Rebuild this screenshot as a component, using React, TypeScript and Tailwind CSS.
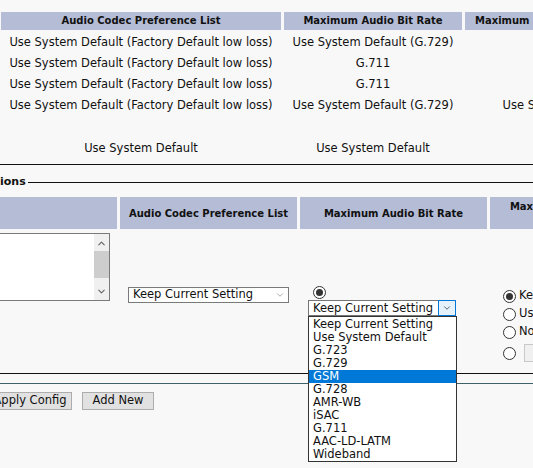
import { ChevronDown, ChevronUp } from 'lucide-react';

const font = { fontFamily: '"DejaVu Sans", Verdana, sans-serif' };

const topRows = [
  ['Use System Default (Factory Default low loss)', 'Use System Default (G.729)', ''],
  ['Use System Default (Factory Default low loss)', 'G.711', ''],
  ['Use System Default (Factory Default low loss)', 'G.711', ''],
  ['Use System Default (Factory Default low loss)', 'Use System Default (G.729)', 'Use System Default (G.729)'],
];

const options = [
  'Keep Current Setting',
  'Use System Default',
  'G.723',
  'G.729',
  'GSM',
  'G.728',
  'AMR-WB',
  'iSAC',
  'G.711',
  'AAC-LD-LATM',
  'Wideband',
];

function Radio({ checked }: { checked?: boolean }) {
  return (
    <span className="flex h-[13px] w-[13px] shrink-0 items-center justify-center rounded-full border border-[#333] bg-white">
      {checked && <span className="h-[7px] w-[7px] rounded-full bg-[#333]" />}
    </span>
  );
}

function Header({ w, children, className = '' }: { w: string; children?: React.ReactNode; className?: string }) {
  return (
    <div className={`${w} shrink-0 bg-[#b4bcd6] text-center text-[10px] font-bold text-[#111] ${className}`}>
      {children}
    </div>
  );
}

export default function App() {
  return (
    <div className="relative h-[468px] w-[533px] overflow-hidden bg-[#f8f8f8] text-[11.5px] text-[#111]" style={font}>
      {/* top summary table */}
      <div className="pt-[12px]">
        <div className="ml-[1px] flex h-[18px] gap-[3px]">
          <Header w="w-[280px]" className="leading-[18px]">Audio Codec Preference List</Header>
          <Header w="w-[178px]" className="leading-[18px]">Maximum Audio Bit Rate</Header>
          <Header w="w-[236px]" className="whitespace-nowrap pl-[10px] text-left leading-[18px]">Maximum Session Bit Rate for Video Calls</Header>
        </div>
        <div className="ml-[1px] mt-[2px]">
          {topRows.map((r, i) => (
            <div key={i} className="flex h-[21px] items-center gap-[3px]">
              <div className="w-[280px] shrink-0 text-center">{r[0]}</div>
              <div className="w-[178px] shrink-0 text-center">{r[1]}</div>
              <div className="w-[236px] shrink-0 whitespace-nowrap text-center">{r[2]}</div>
            </div>
          ))}
          <div className="h-[22px]" />
          <div className="flex h-[21px] items-center gap-[3px]">
            <div className="w-[280px] shrink-0 text-center">Use System Default</div>
            <div className="w-[178px] shrink-0 text-center">Use System Default</div>
          </div>
        </div>
      </div>

      <div className="mt-[5px] h-px bg-[#111]" />

      {/* fieldset */}
      <div className="mt-[10px] flex items-center">
        <span className="text-[11px] font-bold leading-[14px]">ions</span>
        <div className="ml-[2px] h-px flex-1 bg-[#111]" />
      </div>

      <div className="mt-[8px] flex h-[32px] gap-[3px]">
        <Header w="w-[117px]" />
        <Header w="w-[177px]" className="flex items-center justify-center">Audio Codec Preference List</Header>
        <Header w="w-[187px]" className="flex items-center justify-center">Maximum Audio Bit Rate</Header>
        <Header w="w-[190px]" className="pt-[3px] leading-[14px]">
          Maximum Session Bit Rate
          <br />
          for Video Calls
        </Header>
      </div>

      <div className="flex h-[68px] gap-[3px] pt-[4px]">
        <div className="w-[117px] shrink-0">
          <div className="flex h-[68px] w-[110px] border border-l-0 border-[#7a7a7a] bg-white">
            <div className="flex-1" />
            <div className="flex w-[15px] flex-col items-center bg-[#f0f0f0]">
              <ChevronUp size={11} strokeWidth={2.2} className="mt-[4px] text-[#606060]" />
              <div className="mt-[2px] h-[27px] w-[15px] bg-[#cdcdcd]" />
              <div className="flex-1" />
              <ChevronDown size={11} strokeWidth={2.2} className="mb-[3px] text-[#606060]" />
            </div>
          </div>
        </div>
        <div className="w-[177px] shrink-0 pl-[8px] pt-[54px]">
          <div className="flex h-[16px] w-[161px] items-center border border-[#7a7a7a] bg-white pl-[4px]">
            <span className="flex-1 leading-none">Keep Current Setting</span>
            <ChevronDown size={10} strokeWidth={1.5} className="mr-[3px] text-[#777]" />
          </div>
        </div>
        <div className="relative w-[187px] shrink-0 pl-[8px] pt-[53px]">
          <div className="ml-[5px]">
            <Radio checked />
          </div>
          <div className="mt-[1px] flex h-[16px] w-[148px] border border-[#767676] bg-white">
            <span className="flex-1 pl-[4px] leading-[14px]">Keep Current Setting</span>
            <span className="-my-px -mr-px flex w-[18px] items-center justify-center border border-[#0078d7] bg-[#e5f1fb]">
              <ChevronDown size={10} strokeWidth={1.8} className="text-[#333]" />
            </span>
          </div>
          <div className="absolute left-[8px] top-[83px] z-10 w-[149px] border border-[#333] bg-white pt-[1px]">
            {options.map((o) => (
              <div
                key={o}
                className={`h-[13px] pl-[4px] leading-[13px] ${o === 'GSM' ? 'bg-[#0078d7] text-white' : ''}`}
              >
                {o}
              </div>
            ))}
          </div>
        </div>
        <div className="flex w-[160px] shrink-0 flex-col gap-[4px] pl-[13px] pt-[56px]">
          {['Keep Current Setting', 'Use System Default', 'None'].map((t, i) => (
            <div key={t} className="flex h-[14px] items-center gap-[3px] whitespace-nowrap">
              <Radio checked={i === 0} />
              <span>{t}</span>
            </div>
          ))}
          <div className="mt-[1px] flex items-center gap-[8px]">
            <Radio />
            <div className="h-[18px] w-[60px] border border-[#c8c8c8] bg-[#f0f0f0]" />
          </div>
        </div>
      </div>

      <div className="mt-[76px] h-px bg-[#111]" />
      <div className="mt-[9px] h-px bg-[#3f6268]" />

      <div className="-ml-[12px] mt-[8px] flex gap-[10px]">
        <button className="h-[18px] w-[84px] border border-[#adadad] bg-[#e1e1e1] text-[11.5px] leading-none">Apply Config</button>
        <button className="h-[18px] w-[72px] border border-[#adadad] bg-[#e1e1e1] text-[11.5px] leading-none">Add New</button>
      </div>
    </div>
  );
}
